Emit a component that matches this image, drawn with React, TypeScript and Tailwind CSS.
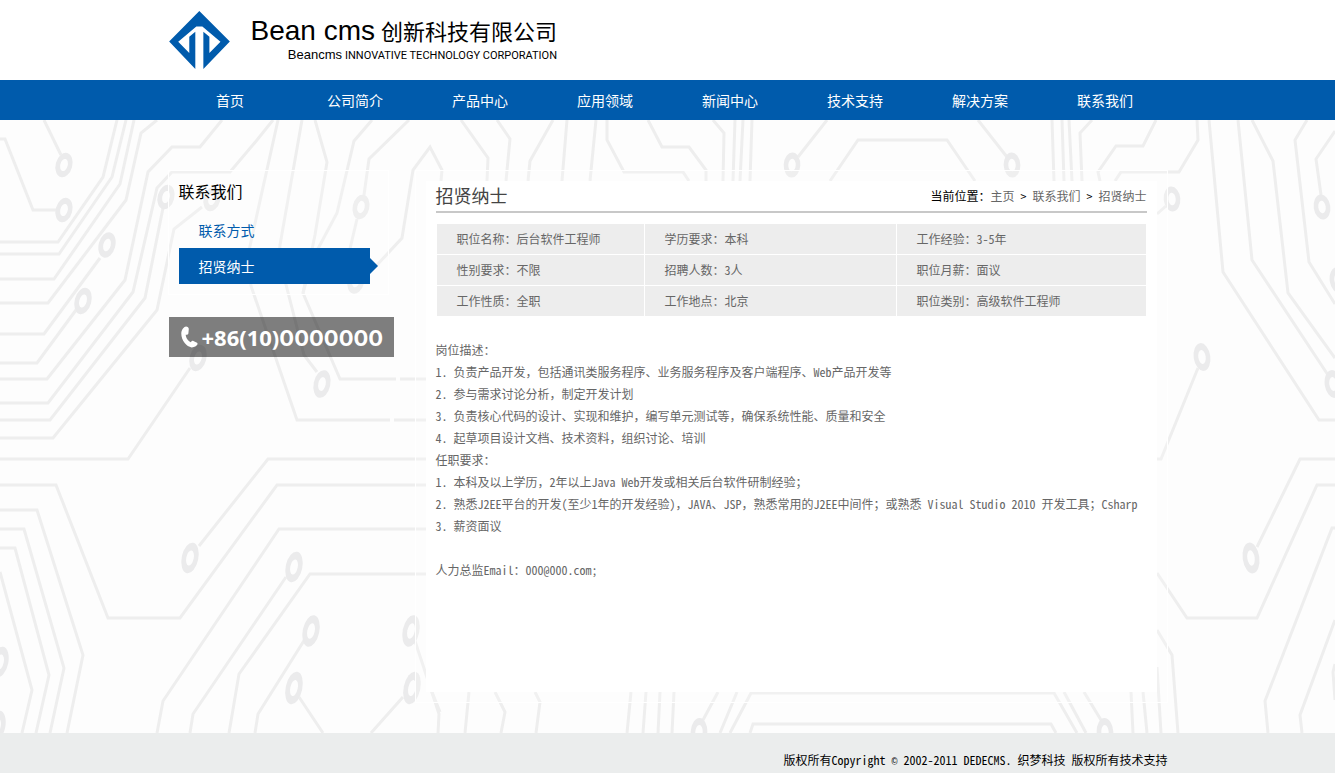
import React from 'react';

const navItems = ['首页', '公司简介', '产品中心', '应用领域', '新闻中心', '技术支持', '解决方案', '联系我们'];

const jobRows = [
  ['职位名称：后台软件工程师', '学历要求：本科', '工作经验：3-5年'],
  ['性别要求：不限', '招聘人数：3人', '职位月薪：面议'],
  ['工作性质：全职', '工作地点：北京', '职位类别：高级软件工程师'],
];

const duties = [
  '岗位描述：',
  '1. 负责产品开发，包括通讯类服务程序、业务服务程序及客户端程序、Web产品开发等',
  '2. 参与需求讨论分析，制定开发计划',
  '3. 负责核心代码的设计、实现和维护，编写单元测试等，确保系统性能、质量和安全',
  '4. 起草项目设计文档、技术资料，组织讨论、培训',
  '任职要求：',
  '1. 本科及以上学历，2年以上Java Web开发或相关后台软件研制经验；',
  '2. 熟悉J2EE平台的开发(至少1年的开发经验)，JAVA、JSP，熟悉常用的J2EE中间件；或熟悉 Visual Studio 2010 开发工具；Csharp',
  '3. 薪资面议',
];

const traces = [
  // left side
  'M0 19H5L33 90H57M44 0L61 35M117 0L103 57L58 122H0M126 0L112 57L59 134H0M134 0L120 64L54 159H0',
  'M157 0L141 13L126 80L48 183H0M100 138L44 214H0M76 190L37 243H0M222 0L200 27H172L148 52L125 160L47 259H0',
  'M273 0L257 20L230 52H172L157 68L133 172L48 283H0M163 88L145 178L50 300H0M202 87L174 109L157 190L53 318H0',
  'M278 0L248 135L251 166L297 300H390M394 300H426M302 0L280 125L279 137L304 235L317 252M315 0L327 42L315 115L303 173L340 259H396M400 259H426',
  'M372 0L354 21L337 93L312 140L303 173M409 0L369 39L364 75M357 99L345 150M363 158L377 145L402 118L413 50L430 27L442 50L441 61',
  'M190 248L128 339H0M0 365H56L108 498H180L277 365H426M0 390H37L83 535L67 613M0 409H24L64 548L50 613',
  'M0 428H15L49 555L36 613M0 452L32 570L22 613M426 339H268L199 426M426 409H279L163 581L157 613M286 457L193 594L190 613',
  'M426 454H310L239 554L229 613M305 519L258 594L255 613M299 577L323 613M415 521L439 594L438 613M403 577L371 613',
  // top centre
  'M461 0L488 38L487 61M497 0L510 19L506 61M553 0L530 41L528 61M567 0L562 61M596 0L590 61M607 0V20L624 52H683L689 61',
  'M648 0L662 27H689L706 50V61M713 0L724 13L723 61M735 0L733 61M743 0L740 61M752 0L750 61M827 0L798 37M830 61L858 20H947L975 61',
  'M978 0L1007 37M1052 0L1054 61M1062 0L1064 61M1069 0L1072 61M1092 0L1080 13L1082 61',
  // right side
  'M1156 0L1143 26H1116L1098 52L1100 61M1197 0L1198 20L1179 52H1121L1115 61M1209 0L1223 152L1319 300H1335',
  'M1238 0L1252 140L1328 255M1252 0L1273 41L1288 173L1335 238M1307 0L1295 20L1309 142L1335 184M1335 11L1316 39L1321 75',
  'M1166 86L1157 94M1198 248L1161 339H1157M1335 339H1300L1257 427M1335 365H1317L1257 498H1187L1157 453',
  'M1335 408H1332L1265 581L1268 613M1335 500L1300 595L1302 613M1335 544L1333 552L1335 580M1157 510L1172 535L1178 613',
  // bottom centre
  'M432 572L440 592M469 572L465 613M495 572L505 592L501 613M535 572L540 582L536 613M631 572L627 613M646 572L643 613',
  'M660 572L658 613M674 572L672 613M718 572L703 600M737 572L720 613M730 613L751 573H1054L1077 613M750 613L753 604H1051L1056 613',
  'M1064 572L1086 613M1084 572L1101 600M1131 572L1133 613M1143 572L1147 613M1157 547L1161 613',
];

// [x, y, tilt, vertical radius]
const rings: [number, number, number, number][] = [
  [64, 45, 15, 12.5], [64, 90, 15, 12.5], [107, 125, 15, 13], [83, 181, 15, 13.5], [166, 77, 15, 12.5], [212, 79, 15, 12.5],
  [361, 87, 12, 12.5], [356, 161, 15, 13], [198, 238, 15, 13.5], [322, 264, 12, 14], [190, 438, 12, 15.5],
  [294, 447, 12, 15.5], [311, 511, 12, 16], [294, 568, 12, 16.5], [411, 511, 12, 16], [412, 568, 12, 16.5],
  [0, 542, 12, 15.5], [-3, 606, 12, 15.5], [792, 45, 3, 12.5], [1012, 45, -3, 12.5], [1172, 79, -5, 12.5],
  [1202, 237, -8, 14], [1322, 87, -8, 12.5], [1338, 160, -8, 13], [1333, 264, -8, 14], [1251, 438, -8, 15.5],
  [699, 612, 3, 14], [1105, 612, -3, 14],
];

function CircuitBackground() {
  return (
    <svg
      aria-hidden="true"
      className="absolute inset-0 h-full w-full"
      viewBox="0 0 1335 613"
      preserveAspectRatio="xMidYMin slice"
      fill="none"
    >
      <g stroke="#eeeeee" strokeWidth="3">
        {traces.map((d) => (
          <path key={d} d={d} />
        ))}
      </g>
      {rings.map(([x, y, tilt, ry]) => (
        <g key={`${x}-${y}`} transform={`rotate(${tilt} ${x} ${y})`}>
          <ellipse cx={x} cy={y} rx="8.3" ry={ry} fill="#ebebec" />
          <ellipse cx={x} cy={y} rx="3.7" ry={ry / 2} fill="#fdfdfd" />
        </g>
      ))}
    </svg>
  );
}

function Logo() {
  return (
    <a href="#" className="flex h-20 items-start text-black">
      <svg viewBox="0 0 181 173" className="mt-[11px] ml-px h-[58px] w-[61px]" aria-hidden="true">
        <path
          fill="#005bac"
          d="M90 0L181 91L102 173V62L120 77V125L153 92L99 46H81L27 92L60 125V77L78 62V173L0 91Z"
        />
      </svg>
      <span className="mt-[14px] ml-[21px] flex flex-col items-end">
        <span className="flex items-baseline gap-[6px] whitespace-nowrap leading-8">
          <span className="font-['Liberation_Sans',sans-serif] text-[28px]">Bean cms</span>
          <span className="text-[22px]">创新科技有限公司</span>
        </span>
        <span className="flex items-baseline gap-[3px] whitespace-nowrap leading-[15px]">
          <span className="font-['Liberation_Sans',sans-serif] text-[13px]">Beancms</span>
          <span className="font-['Roboto',sans-serif] text-[11px]">INNOVATIVE TECHNOLOGY CORPORATION</span>
        </span>
      </span>
    </a>
  );
}

export default function App() {
  return (
    <div className="flex min-h-screen flex-col bg-white font-['Noto_Sans_CJK_SC',sans-serif] text-xs text-[#666]">
      <header>
        <div className="mx-auto max-w-[1000px]">
          <Logo />
        </div>
        <nav className="bg-[#005bac]">
          <ul className="mx-auto grid max-w-[1000px] grid-cols-8">
            {navItems.map((item) => (
              <li key={item}>
                <a href="#" className="block text-center text-sm leading-10 text-white">
                  {item}
                </a>
              </li>
            ))}
          </ul>
        </nav>
      </header>

      <div className="relative grow overflow-hidden bg-[#fdfdfd]">
        <CircuitBackground />
        <div className="relative mx-auto flex max-w-[1000px] items-start justify-between pt-[50px] pb-[30px]">
          <aside className="w-[226px] shrink-0">
            <section className="mr-[5px] border border-white bg-white/20 p-[10px]">
              <h2 className="mb-[11px] text-base leading-5 text-black">联系我们</h2>
              <ul className="text-sm leading-9">
                <li>
                  <a href="#" className="block pl-5 text-[#005bac]">
                    联系方式
                  </a>
                </li>
                <li>
                  <a href="#" className="flex items-center text-white">
                    <span className="grow bg-[#005bac] pl-5">招贤纳士</span>
                    <svg viewBox="0 0 8 16" className="h-4 w-2" aria-hidden="true">
                      <path d="M0 0L8 8L0 16Z" fill="#005bac" />
                    </svg>
                  </a>
                </li>
              </ul>
            </section>
            <p className="mt-[22px] ml-px flex h-10 items-center bg-black/50 pl-3 whitespace-nowrap text-white">
              <svg viewBox="0 0 17 22" className="mr-1 h-[22px] w-[17px]" aria-hidden="true">
                <path
                  fill="#fff"
                  d="M5 0.6C3.2 0.6 0.4 3.6 0.3 7.6C0.2 14.4 5.6 21 10.6 21.4C13.2 21.5 15.6 20.2 16.4 18.6C16.8 17.7 16.4 17 15.5 16.6L12.4 15C11.4 14.5 10.6 15 9.9 16.2C7.2 15.2 4.8 11.6 4.7 8.7C6.2 8.8 7.3 8.3 7.4 7.2L7.8 3C7.8 1.6 6.6 0.6 5 0.6Z"
                />
              </svg>
              <span className="flex items-baseline text-[22px] font-bold leading-[38px]">
                <span className="font-['Open_Sans',sans-serif]">+86(10)</span>
                <span className="font-['Inter',sans-serif]">0000000</span>
              </span>
            </p>
          </aside>

          <main className="ml-[21px] min-w-0 grow border border-white bg-white/20 p-[10px] font-['Noto_Sans_Mono_CJK_SC','Noto_Sans_CJK_SC',monospace]">
            <div className="min-h-[511px] bg-white px-[10px]">
              <div className="flex h-8 items-start justify-between border-b-2 border-[#c8c8c8]">
                <h1 className="text-lg leading-7 text-[#444]">招贤纳士</h1>
                <p className="leading-[30px] text-black">
                  当前位置：
                  <a href="#" className="text-[#666]">主页</a>
                  {' > '}
                  <a href="#" className="text-[#666]">联系我们</a>
                  {' > '}
                  <span className="text-[#666]">招贤纳士</span>
                </p>
              </div>
              <table className="mt-[10px] w-full table-fixed border-separate border-spacing-px">
                <colgroup>
                  <col className="w-[207px]" />
                  <col className="w-[251px]" />
                  <col />
                </colgroup>
                <tbody>
                  {jobRows.map((row) => (
                    <tr key={row[0]}>
                      {row.map((cell) => (
                        <td key={cell} className="h-[30px] bg-[#ededed] pl-5">
                          {cell}
                        </td>
                      ))}
                    </tr>
                  ))}
                </tbody>
              </table>
              <div className="mt-[22px] leading-[22px]">
                {duties.map((line) => (
                  <p key={line}>{line}</p>
                ))}
                <p className="mt-[22px]">人力总监Email：000@000.com;</p>
              </div>
            </div>
          </main>
        </div>
      </div>

      <footer className="h-10 bg-[#ebeded] font-['Noto_Sans_Mono_CJK_SC','Noto_Sans_CJK_SC',monospace]">
        <p className="mx-auto max-w-[1000px] pt-4 text-right leading-[22px] text-black">
          版权所有Copyright <span className="font-['Liberation_Mono',monospace] text-[10px]">©</span> 2002-2011 DEDECMS. 织梦科技 版权所有技术支持
        </p>
      </footer>
    </div>
  );
}
